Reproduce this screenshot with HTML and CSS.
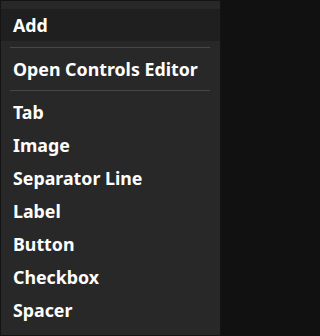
FILE: index.html
```html
<!DOCTYPE html>
<html>
<head>
<meta charset="utf-8">
<link rel="stylesheet" href="styles.css">
</head>
<body>
<div class="menu">
  <div class="menu-header">Add</div>
  <div class="sep"></div>
  <div class="item">Open Controls Editor</div>
  <div class="sep sep-second"></div>
  <div class="item">Tab</div>
  <div class="item">Image</div>
  <div class="item">Separator Line</div>
  <div class="item">Label</div>
  <div class="item">Button</div>
  <div class="item">Checkbox</div>
  <div class="item">Spacer</div>
</div>
</body>
</html>
```
FILE: styles.css
```css
html, body {
  margin: 0;
  padding: 0;
  background: #111111;
}
.menu {
  box-sizing: border-box;
  width: 221px;
  height: 336px;
  border: 1px solid #141414;
  background: #282828;
  padding-top: 8px;
  font-family: "Noto Sans", "Open Sans", sans-serif;
  font-weight: 700;
  font-size: 17.8px;
  color: #ffffff;
}
.menu-header {
  background: #1f1f1f;
  height: 32px;
  line-height: 32px;
  padding-left: 12px;
}
.sep {
  height: 1px;
  background: #474747;
  margin: 6px 10px 5px 9px;
}
.sep-second {
  margin-top: 4px;
}
.item {
  height: 33px;
  line-height: 33px;
  padding-left: 12px;
  white-space: nowrap;
}
```
